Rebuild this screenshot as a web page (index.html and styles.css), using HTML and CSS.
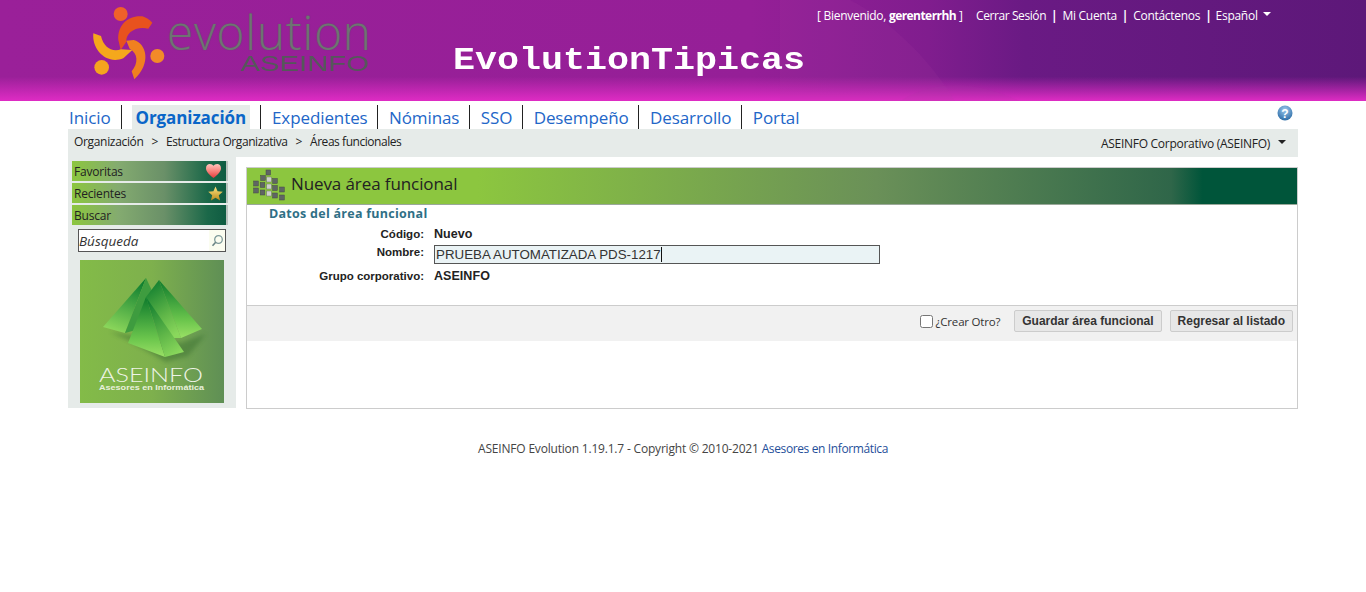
FILE: index.html
```html
<!DOCTYPE html>
<html lang="es">
<head>
<meta charset="utf-8">
<title>EvolutionTipicas</title>
<link rel="stylesheet" href="styles.css">
</head>
<body>
<header class="top">
  <svg class="top-swoosh" viewBox="0 0 300 101" width="300" height="101" aria-hidden="true">
    <path d="M0 0H70C110 20 150 60 175 101H0Z" fill="#b040a8" opacity=".12"/>
    <path d="M120 101C150 82 190 78 240 101Z" fill="#a040a0" opacity=".10"/>
  </svg>
  <div class="logo">
    <svg class="logo-mark" viewBox="0 0 300 255" width="100" height="85" aria-hidden="true">
      <circle cx="107" cy="42" r="21" fill="#f0602a"/>
      <circle cx="217" cy="168" r="21" fill="#f38a28"/>
      <circle cx="50" cy="202" r="22" fill="#f5a41f"/>
      <path d="M172 49C130 45 97 75 100 120L107 150 124 125C122 100 150 78 190 86L202 68C192 58 182 52 172 49Z" fill="#e8521e"/>
      <path d="M124 122 146 120C185 130 200 190 148 238L140 214C160 190 160 160 134 146Z" fill="#f08020"/>
      <path d="M25 100C20 150 65 195 115 175L142 150 108 148C80 158 55 140 48 108Z" fill="#f5a81c"/>
    </svg>
    <div class="logo-text">
      <span class="logo-evo">evolution</span>
      <span class="logo-ase">ASEINFO</span>
    </div>
  </div>
  <div class="app-name">EvolutionTipicas</div>
  <nav class="user-nav">
    <span>[ Bienvenido, <b>gerenterrhh</b> ]</span>
    <a class="user-first">Cerrar Sesión</a><i>|</i><a>Mi Cuenta</a><i>|</i><a>Contáctenos</a><i>|</i><a class="user-lang">Español</a><em class="caret-w"></em>
  </nav>
</header>

<div class="wrap">
  <nav class="menu">
    <a class="m">Inicio</a>
    <a class="m active">Organización</a>
    <a class="m">Expedientes</a>
    <a class="m">Nóminas</a>
    <a class="m">SSO</a>
    <a class="m">Desempeño</a>
    <a class="m">Desarrollo</a>
    <a class="m last">Portal</a>
    <svg class="help" viewBox="0 0 16 16" width="16" height="16" aria-label="Ayuda">
      <defs><radialGradient id="hg" cx=".5" cy=".3" r=".8"><stop offset="0" stop-color="#9cc9ee"/><stop offset="1" stop-color="#1d5f9c"/></radialGradient></defs>
      <circle cx="8" cy="8" r="7.500" fill="url(#hg)"/>
      <text x="8" y="12.500" text-anchor="middle" class="help-q">?</text>
    </svg>
  </nav>

  <div class="crumbs">
    <div class="crumb-path">
      <span>Organización</span><span class="gt">&gt;</span><span class="crumb-mid">Estructura Organizativa</span><span class="gt">&gt;</span><span class="crumb-last">Áreas funcionales</span>
    </div>
    <div class="corp">ASEINFO Corporativo (ASEINFO)<em class="caret-b"></em></div>
  </div>

  <div class="cols">
    <aside class="side">
      <div class="side-item">Favoritas
        <svg class="si" viewBox="0 0 18 16" width="17" height="15" aria-hidden="true">
          <defs><linearGradient id="hrt" x1="0" y1="0" x2="0" y2="1"><stop offset="0" stop-color="#ffc4bc"/><stop offset=".5" stop-color="#f8837c"/><stop offset="1" stop-color="#e23c3c"/></linearGradient></defs>
          <path d="M9 16C3 11 1 8.500 1 5.500 1 2.500 3 1 5 1 7 1 8.300 2 9 3 9.700 2 11 1 13 1 15 1 17 2.500 17 5.500 17 8.500 15 11 9 16Z" fill="url(#hrt)"/>
        </svg>
      </div>
      <div class="side-item">Recientes
        <svg class="si star" viewBox="0 0 16 16" width="15" height="15" aria-hidden="true">
          <defs><linearGradient id="st" x1="0" y1="0" x2="0" y2="1"><stop offset="0" stop-color="#ffe680"/><stop offset="1" stop-color="#b88a1c"/></linearGradient></defs>
          <path d="M8 .5 10.200 5.700 15.800 6.200 11.500 9.900 12.900 15.500 8 12.500 3.100 15.500 4.500 9.900 .2 6.200 5.800 5.700Z" fill="url(#st)"/>
        </svg>
      </div>
      <div class="side-item">Buscar</div>
      <div class="search">
        <span class="search-text">Búsqueda</span>
        <span class="search-btn">
          <svg viewBox="0 0 14 14" width="14" height="14" aria-hidden="true">
            <circle cx="8.500" cy="5.500" r="3.800" fill="none" stroke="#7d9a9a" stroke-width="1.300"/>
            <path d="M5.700 8.300 2.500 11.800" stroke="#6a8484" stroke-width="1.600"/>
          </svg>
        </span>
      </div>
      <div class="promo">
        <svg viewBox="0 0 144 143" width="144" height="143" aria-hidden="true">
          <defs>
            <linearGradient id="pa" x1=".6" y1="0" x2=".3" y2="1"><stop offset="0" stop-color="#0f7f30"/><stop offset="1" stop-color="#8fd95c"/></linearGradient>
            <linearGradient id="pb" x1=".3" y1="0" x2=".7" y2="1"><stop offset="0" stop-color="#127f30"/><stop offset=".6" stop-color="#5fb648"/><stop offset="1" stop-color="#8ad85c"/></linearGradient>
            <linearGradient id="pc" x1=".5" y1="0" x2=".5" y2="1"><stop offset="0" stop-color="#0d7a2c"/><stop offset=".7" stop-color="#6cc64d"/><stop offset="1" stop-color="#9ae065"/></linearGradient>
            <filter id="bl"><feGaussianBlur stdDeviation="2"/></filter>
          </defs>
          <path d="M30 72 48 80 86 102 108 96 126 74 101 83Z" fill="#356b2e" opacity=".45" filter="url(#bl)"/>
          <path d="M66 18 23 67 45 73Z" fill="url(#pa)"/>
          <path d="M66 18 45 73 56 70 74 35Z" fill="#3e9c3f"/>
          <path d="M79 20 66 37 88 78 101 78Z" fill="url(#pb)"/>
          <path d="M79 20 122 69 101 78Z" fill="url(#pc)"/>
          <path d="M66 37 48 83 85 97Z" fill="url(#pc)"/>
          <path d="M66 37 85 97 104 92Z" fill="url(#pb)"/>
          <text x="19" y="122" textLength="104" lengthAdjust="spacingAndGlyphs" class="promo-big">ASEINFO</text>
          <text x="19" y="130" textLength="105" lengthAdjust="spacingAndGlyphs" class="promo-small">Asesores en Informática</text>
        </svg>
      </div>
    </aside>

    <main class="panel">
      <div class="title-bar">
        <svg class="title-ic" viewBox="0 0 38 36" width="38" height="36" aria-hidden="true">
          <g class="org-d">
            <rect x="16" y="2" width="4.600" height="5"/>
            <rect x="10.700" y="7.500" width="4.600" height="5"/><rect x="22.700" y="10.500" width="4.600" height="5"/>
            <rect x="3.700" y="13" width="4.600" height="5"/><rect x="10.200" y="14.500" width="4.600" height="5"/><rect x="22.700" y="17.500" width="4.600" height="5"/><rect x="29.700" y="19" width="4.600" height="5"/>
            <rect x="3.700" y="20" width="4.600" height="5"/><rect x="10.200" y="22" width="4.600" height="5"/><rect x="22.700" y="25" width="4.600" height="5"/><rect x="29.700" y="27" width="4.600" height="5"/>
          </g>
          <g class="org-l">
            <rect x="16.700" y="9" width="4.600" height="5"/><rect x="16.700" y="16" width="4.600" height="5"/><rect x="16.700" y="23" width="4.600" height="5"/>
          </g>
        </svg>
        <h1 class="title">Nueva área funcional</h1>
      </div>
      <h2 class="section">Datos del área funcional</h2>
      <div class="form">
        <div class="row row-code"><label class="lbl">Código:</label><div class="val">Nuevo</div></div>
        <div class="row row-name"><label class="lbl">Nombre:</label>
          <div class="inp-wrap"><input class="inp" type="text" value="PRUEBA AUTOMATIZADA PDS-1217"><span class="inp-caret"></span></div>
        </div>
        <div class="row row-group"><label class="lbl">Grupo corporativo:</label><div class="val">ASEINFO</div></div>
      </div>
      <div class="actions">
        <label class="chk"><input type="checkbox"><span>¿Crear Otro?</span></label>
        <button class="btn">Guardar área funcional</button>
        <button class="btn">Regresar al listado</button>
      </div>
    </main>
  </div>

  <footer class="foot">ASEINFO Evolution 1.19.1.7 - Copyright © 2010-2021 <a>Asesores en Informática</a></footer>
</div>
</body>
</html>
```
FILE: styles.css
```css
* { box-sizing: border-box; }
html, body { margin: 0; background: #fff; }
body { font-family: "Open Sans", "Noto Sans", sans-serif; color: #222; height: 592px; overflow: hidden; }

.top {
  position: relative;
  height: 101px;
  background:
    linear-gradient(to bottom, rgba(224,40,196,0) 76%, #df2cc4 100%),
    linear-gradient(to right, #9a2099 0%, #951f97 55%, #801d8e 68%, #6a1a84 75%, #5d1879 100%);
  overflow: hidden;
}
.top-swoosh { position: absolute; left: 780px; top: 0; }
.logo { position: absolute; left: 85px; top: 0; display: flex; }
.logo-mark { display: block; flex: none; }
.logo-text { position: relative; width: 210px; height: 85px; }
.logo-evo {
  position: absolute; left: -18px; top: 11px;
  font: 300 47.500px/42px "Open Sans", sans-serif;
  letter-spacing: .85px;
  color: #6f7373;
  text-shadow: 0 0 1px #55585a;
}
.logo-ase {
  position: absolute; left: 55px; top: 53px;
  width: 129px;
  text-align: right;
  font: 400 22.500px/22px "Liberation Sans", sans-serif;
  color: #55585a;
  transform: scaleX(1.3);
  transform-origin: right;
  white-space: nowrap;
}
.app-name {
  position: absolute; left: 453px; top: 43px;
  font: 700 31px/36px "Liberation Mono", monospace;
  color: #fff;
  white-space: nowrap;
  transform: scaleX(1.183);
  transform-origin: left;
}
.user-nav {
  position: absolute; left: 817px; top: 8px;
  font-size: 12px; line-height: 16px;
  color: #fff;
  white-space: nowrap;
  display: flex; align-items: center;
  letter-spacing: -.28px;
}
.user-nav b { letter-spacing: -.55px; }
.user-nav i { font-style: normal; margin: 0 5px; font-weight: 700; }
.user-first { margin-left: 13.500px; letter-spacing: -.42px; }
.user-lang { margin-left: -1px; }
.caret-w, .caret-b {
  display: inline-block; width: 0; height: 0;
  border-left: 4px solid transparent; border-right: 4px solid transparent;
}
.caret-w { border-top: 4px solid #fff; margin: 0 0 4px 5px; }
.caret-b { border-top: 4px solid #222; margin: 0 0 4px 8px; }

.wrap { width: 1230px; margin: 0 0 0 68px; }
.menu {
  position: relative;
  display: flex; align-items: stretch;
  height: 24px; margin-top: 4px;
}
.m {
  font-size: 17px; line-height: 26px;
  color: #2266c8;
  padding: 0 9.400px 0 11px;
  border-right: 1px solid #222;
  white-space: nowrap;
  height: 24px;
  letter-spacing: -.1px;
}
.m:first-child { padding: 0 10px 0 1px; }
.m.active {
  font-weight: 700; color: #0a66c8;
  background: #e6ebe9;
  padding: 0 4px;
  margin: 0 11px 0 10px;
  border-right: 0;
  position: relative;
}
.m.active::after { content: ""; position: absolute; right: -11px; top: 0; height: 24px; border-right: 1px solid #222; }
.m.last { border-right: 0; }
.help { position: absolute; right: 5px; top: 0; }
.help-q { font: 700 12px "Liberation Sans", sans-serif; fill: #fff; }

.crumbs {
  height: 28px;
  background: #e6ebe9;
  display: flex; justify-content: space-between;
  font-size: 12px; line-height: 16px;
  letter-spacing: -.33px;
  padding: 5px 12px 0 6px;
}
.gt { margin: 0 8px; }
.crumb-mid { letter-spacing: -.42px; }
.crumb-last { letter-spacing: -.45px; }
.corp { padding-top: 2px; letter-spacing: -.28px; }

.cols { display: flex; align-items: flex-start; }
.side {
  width: 168px; height: 251px; flex: none;
  background: #e6ebe9;
  padding: 4px 8px 0 4px;
}
.side-item {
  position: relative;
  height: 20px;
  margin-bottom: 2px;
  background: linear-gradient(to right, #8cc63f 0%, #84ab70 30%, #6a9068 60%, #1b6849 88%, #0f5c42 100%);
  border-right: 2px solid #b9c2bd;
  font-size: 12px; line-height: 21px;
  letter-spacing: -.2px;
  color: #222;
  padding-left: 2px;
}
.si { position: absolute; right: 4px; top: 2px; }
.si.star { right: 3px; top: 3px; }
.search {
  position: relative;
  height: 23px; width: 148px;
  margin: 4px 0 0 6px;
  background: #fff;
  border: 1px solid #555;
  font-size: 13.500px; line-height: 22px;
  font-style: italic;
  color: #333;
}
.search-btn {
  position: absolute; right: 0; top: 0;
  width: 16px; height: 21px;
  background: #fbfdf0;
  display: flex; align-items: center; justify-content: center;
}
.promo {
  width: 144px; height: 143px;
  margin: 8px 0 0 8px;
  background: linear-gradient(to right, #83bb48 0%, #7eb04d 50%, #5f8f55 100%);
}
.promo svg { display: block; }
.promo-big { font: 300 20px "Lato", "Liberation Sans", sans-serif; fill: #eef4e6; }
.promo-small { font: 700 8px "Liberation Sans", sans-serif; fill: #e8f0dc; }

.panel {
  width: 1052px; height: 242px;
  margin: 10px 0 0 10px;
  border: 1px solid #ccc;
  background: #fff;
}
.title-bar {
  display: flex; align-items: flex-start;
  height: 37px;
  background: linear-gradient(to right, #8cc63f 0%, #8cc63f 22%, #6a9058 60%, #2f6649 88%, #00553a 91%, #00553a 100%);
  border-bottom: 1px solid #9aa89a;
  padding-left: 3px;
}
.title-ic { flex: none; }
.org-d { fill: #5f6563; stroke: #454a47; stroke-width: .5; }
.org-l { fill: #cdd0ca; stroke: #6f736f; stroke-width: .5; }
.title { margin: 0 0 0 3px; font-size: 17px; line-height: 32px; font-weight: 400; color: #222; letter-spacing: -.1px; }
.section { margin: 0; padding-left: 22px; font-size: 12.500px; line-height: 17px; font-weight: 700; color: #2f6f86; letter-spacing: .27px; }
.form { height: 83px; }
.row { display: flex; }
.lbl {
  width: 177px; flex: none; text-align: right;
  font: 700 11.500px/14px "Liberation Sans", sans-serif;
  color: #222;
}
.val { margin-left: 10px; font: 700 12.500px/14px "Liberation Sans", sans-serif; color: #222; letter-spacing: .05px; }
.row-code { height: 22px; padding-top: 5px; }
.row-name { height: 21px; padding-top: 1px; }
.row-group { padding-top: 4px; }
.inp-wrap { position: relative; margin-left: 10px; }
.inp {
  display: block;
  width: 446px; height: 19px;
  border: 1px solid #555;
  background: #eaf3f5;
  font: 400 13.333px/17px "Liberation Sans", sans-serif;
  color: #333;
  padding: 0 1px;
  border-radius: 0;
  outline: 0;
}
.inp-caret { position: absolute; left: 227px; top: 2px; height: 15px; border-left: 1px solid #111; }
.actions {
  display: flex; align-items: center; justify-content: flex-end;
  height: 36px;
  background: #f1f1f1;
  border-top: 1px solid #ccc;
  padding: 0 4px 5px 0;
}
.chk { display: flex; align-items: center; font-size: 11.500px; letter-spacing: -.2px; color: #333; margin-right: 14px; }
.chk input { margin: 0 3px 0 0; width: 13px; height: 13px; }
.btn {
  height: 22px;
  padding: 0 7px;
  margin-left: 8px;
  border: 1px solid #ccc;
  border-radius: 2px;
  background: #e7e7e7;
  font: 700 12px/18px "Liberation Sans", sans-serif;
  color: #333;
}
.btn:first-of-type { margin-left: 0; }
.foot {
  margin-top: 32px;
  text-align: center;
  font-size: 12px; line-height: 16px;
  color: #444;
  letter-spacing: -.19px;
}
.foot a { color: #1f4f9a; letter-spacing: -.38px; }
```
